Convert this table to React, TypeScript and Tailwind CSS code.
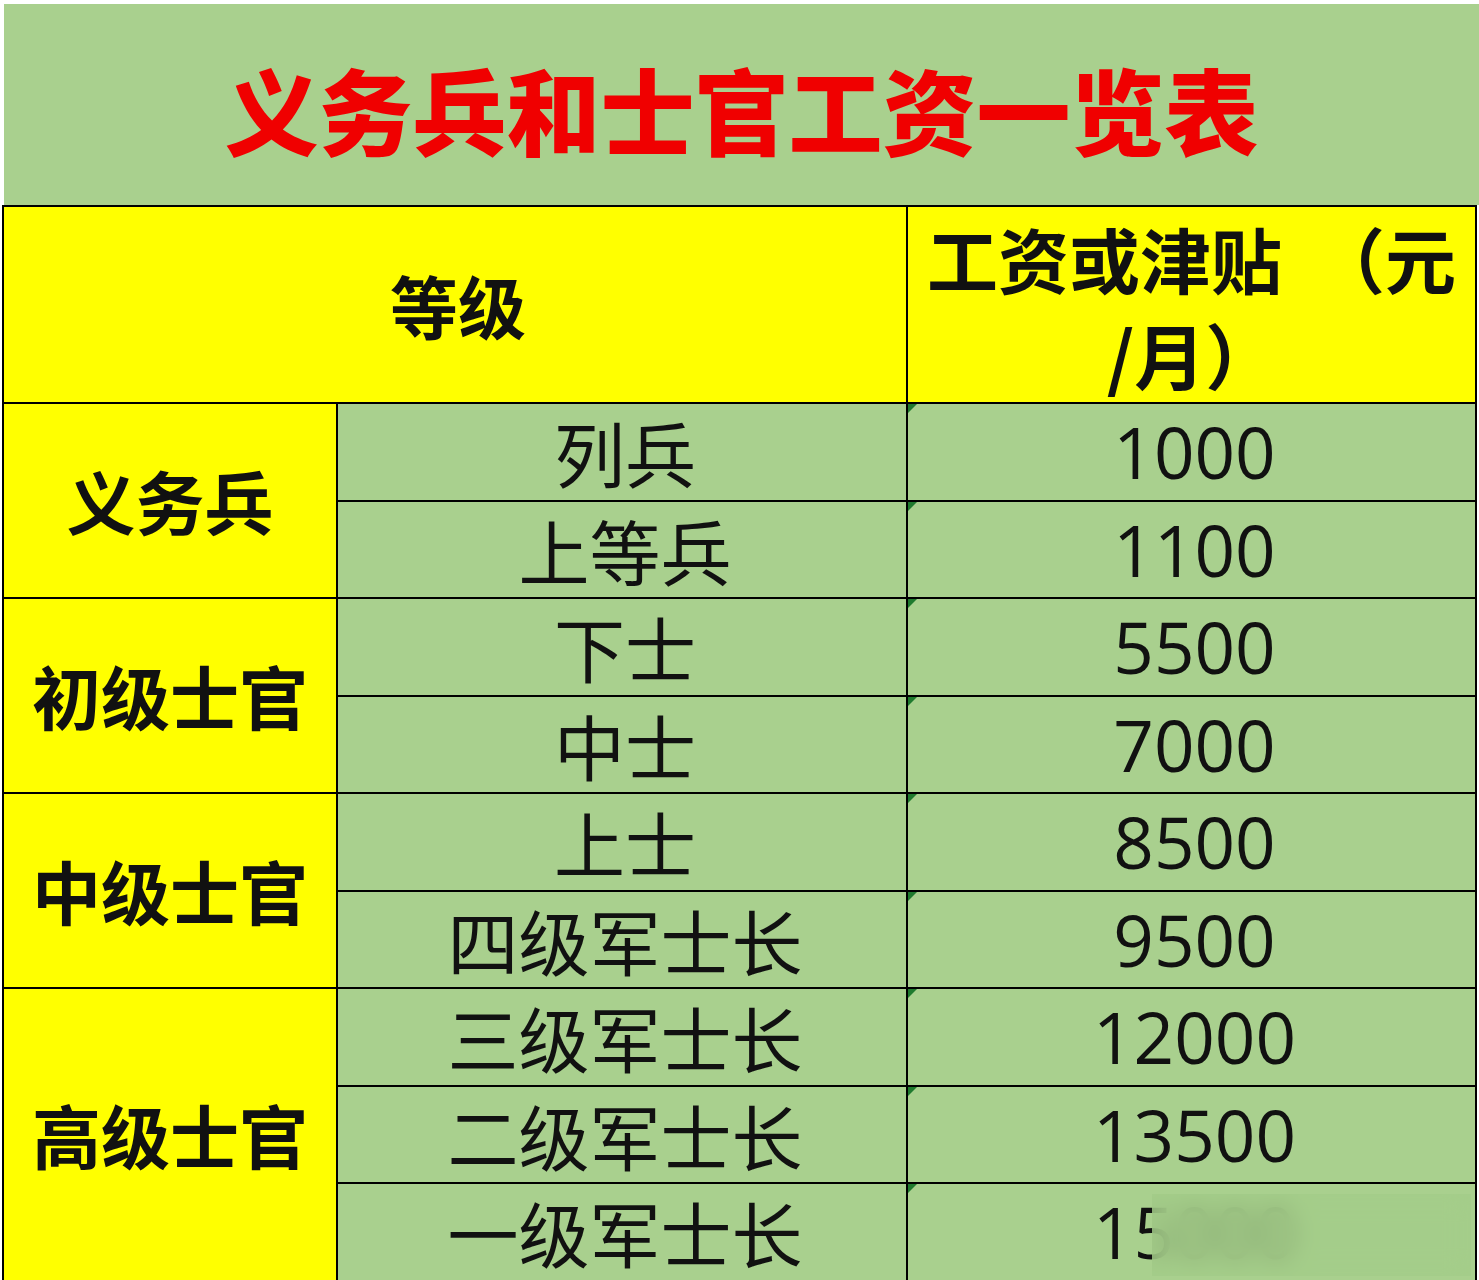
const GREEN = "bg-[#a9d08e]";

const rows = [
  { rank: "列兵", pay: "1000" },
  { rank: "上等兵", pay: "1100" },
  { rank: "下士", pay: "5500" },
  { rank: "中士", pay: "7000" },
  { rank: "上士", pay: "8500" },
  { rank: "四级军士长", pay: "9500" },
  { rank: "三级军士长", pay: "12000" },
  { rank: "二级军士长", pay: "13500" },
  { rank: "一级军士长", pay: "15000" },
];

const groups = [
  { name: "义务兵", row: "row-[2/4]" },
  { name: "初级士官", row: "row-[4/6]" },
  { name: "中级士官", row: "row-[6/8]" },
  { name: "高级士官", row: "row-[8/11]" },
];

const rowStart = [
  "row-start-2",
  "row-start-3",
  "row-start-4",
  "row-start-5",
  "row-start-6",
  "row-start-7",
  "row-start-8",
  "row-start-9",
  "row-start-10",
];

function Flag() {
  // excel "number stored as text" marker
  return (
    <svg width="9" height="9" viewBox="0 0 9 9" className="absolute left-0 top-0">
      <polygon points="0,0 9,0 0,9" fill="#1f7a2e" />
    </svg>
  );
}

export default function App() {
  return (
    <div
      className="w-[1479px] h-[1280px] overflow-hidden bg-white text-[#111]"
      style={{ fontFamily: '"Noto Sans CJK SC", "Noto Sans", sans-serif' }}
    >
      {/* Title band */}
      <div className={`ml-[4px] mt-[4px] h-[201px] ${GREEN} flex items-center justify-center`}>
        <h1 className="text-[94px] font-black text-[#f00000] leading-none pt-[6px]">
          义务兵和士官工资一览表
        </h1>
      </div>

      {/* Table */}
      <div className="ml-[2px] w-[1475px] bg-black p-[2px] grid gap-[2px] grid-cols-[332px_568px_1fr] grid-rows-[195px_repeat(9,95.5px)]">
        <div className="col-[1/3] row-start-1 bg-[#ffff00] flex items-center justify-center">
          <span className="text-[68px] font-bold leading-none pl-[6px]">等级</span>
        </div>
        <div className="col-start-3 row-start-1 bg-[#ffff00] flex items-center justify-center">
          <span className="text-[71px] font-bold leading-[96px] text-center whitespace-nowrap">
            工资或津贴&nbsp;&nbsp;（元
            <br />
            /月）
          </span>
        </div>

        {groups.map((g) => (
          <div
            key={g.name}
            className={`col-start-1 ${g.row} bg-[#ffff00] flex items-center justify-center`}
          >
            <span className="text-[69px] font-bold leading-none">{g.name}</span>
          </div>
        ))}

        {rows.map((r, i) => (
          <div
            key={r.rank}
            className={`col-start-2 ${rowStart[i]} ${GREEN} flex items-center justify-center`}
          >
            <span className="text-[71px] font-normal leading-none pl-[6px]">{r.rank}</span>
          </div>
        ))}

        {rows.map((r, i) => (
          <div
            key={r.pay}
            className={`relative col-start-3 ${rowStart[i]} ${GREEN} flex items-center justify-center`}
          >
            <Flag />
            <span
              className="text-[71px] leading-none pl-[6px]"
              style={{ fontFamily: '"Open Sans", "Noto Sans", sans-serif' }}
            >
              {r.pay}
            </span>
            {i === rows.length - 1 && (
              <div className="absolute left-[244px] right-[4px] top-[10px] bottom-[4px] backdrop-blur-md bg-[#a3cc88]/75" />
            )}
          </div>
        ))}
      </div>
    </div>
  );
}
